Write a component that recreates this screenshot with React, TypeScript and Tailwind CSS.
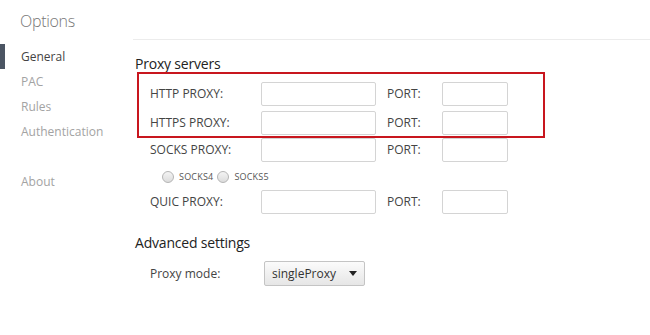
import React from "react";

const font = { fontFamily: '"Segoe UI", "Open Sans", sans-serif' };

const navItems = [
  { label: "General", active: true },
  { label: "PAC", active: false },
  { label: "Rules", active: false },
  { label: "Authentication", active: false },
];

const ProxyRow: React.FC<{ label: string }> = ({ label }) => (
  <div className="flex items-center h-[24px]">
    <span className="w-[111px] text-[12px] text-[#444]">{label}</span>
    <div className="w-[115px] h-[24px] border border-[#d4d4d4] rounded-[2px] bg-white" />
    <span className="w-[66px] pl-[11px] text-[12px] text-[#444]">PORT:</span>
    <div className="w-[66px] h-[24px] border border-[#d4d4d4] rounded-[2px] bg-white" />
  </div>
);

const Radio: React.FC<{ label: string }> = ({ label }) => (
  <div className="flex items-center gap-[5px]">
    <div className="w-[12px] h-[12px] rounded-full border border-[#b5b5b5] bg-gradient-to-b from-[#f4f4f4] to-[#dcdcdc]" />
    <span className="text-[9px] text-[#555] uppercase tracking-[0.2px]">{label}</span>
  </div>
);

const App: React.FC = () => {
  return (
    <div className="w-[650px] h-[335px] bg-white flex overflow-hidden" style={font}>
      {/* sidebar */}
      <div className="w-[135px] shrink-0 flex flex-col">
        <div className="h-[40px] pl-[20px] pt-[9px] text-[16px] font-light text-[#777] tracking-[-0.3px]">
          Options
        </div>
        <div className="flex flex-col pt-[4px]">
          {navItems.map((item) => (
            <div key={item.label} className="relative h-[25px] flex items-center pl-[21px]">
              {item.active && <div className="absolute left-0 top-0 w-[5px] h-[25px] bg-[#4b5563]" />}
              <span className={`text-[12px] ${item.active ? "text-[#444]" : "text-[#a3a3a3]"}`}>
                {item.label}
              </span>
            </div>
          ))}
          <div className="h-[25px] flex items-center pl-[21px] mt-[25px]">
            <span className="text-[12px] text-[#a3a3a3]">About</span>
          </div>
        </div>
      </div>

      {/* main */}
      <div className="flex-1 flex flex-col">
        <div className="h-[40px] border-b border-[#ececec] -ml-[2px]" />
        <div className="h-[32px] pt-[15px] text-[14px] text-[#222] leading-[17px] tracking-[-0.2px]">
          Proxy servers
        </div>
        <div className="ml-[2px] w-[408px] h-[66px] border-2 border-[#c8161e] pl-[11px] pt-[8px] flex flex-col gap-[5px]">
          <ProxyRow label="HTTP PROXY:" />
          <ProxyRow label="HTTPS PROXY:" />
        </div>
        <div className="pl-[15px] flex flex-col">
          <ProxyRow label="SOCKS PROXY:" />
          <div className="h-[22px] mt-[4px] pl-[12px] flex items-center gap-[4px]">
            <Radio label="socks4" />
            <Radio label="socks5" />
          </div>
          <div className="mt-[2px]">
            <ProxyRow label="QUIC PROXY:" />
          </div>
        </div>
        <div className="mt-[20px] text-[14px] text-[#222] leading-[18px] tracking-[-0.2px]">
          Advanced settings
        </div>
        <div className="mt-[9px] pl-[15px] flex items-center">
          <span className="w-[114px] text-[12px] text-[#444]">Proxy mode:</span>
          <div className="w-[101px] h-[25px] border border-[#c4c4c4] rounded-[2px] bg-gradient-to-b from-[#fbfbfb] to-[#e6e6e6] flex items-center justify-between pl-[7px] pr-[7px]">
            <span className="text-[12px] text-[#333]">singleProxy</span>
            <svg width="8" height="5" viewBox="0 0 8 5">
              <path d="M0 0 L8 0 L4 5 Z" fill="#222" />
            </svg>
          </div>
        </div>
      </div>
    </div>
  );
};

export default App;
